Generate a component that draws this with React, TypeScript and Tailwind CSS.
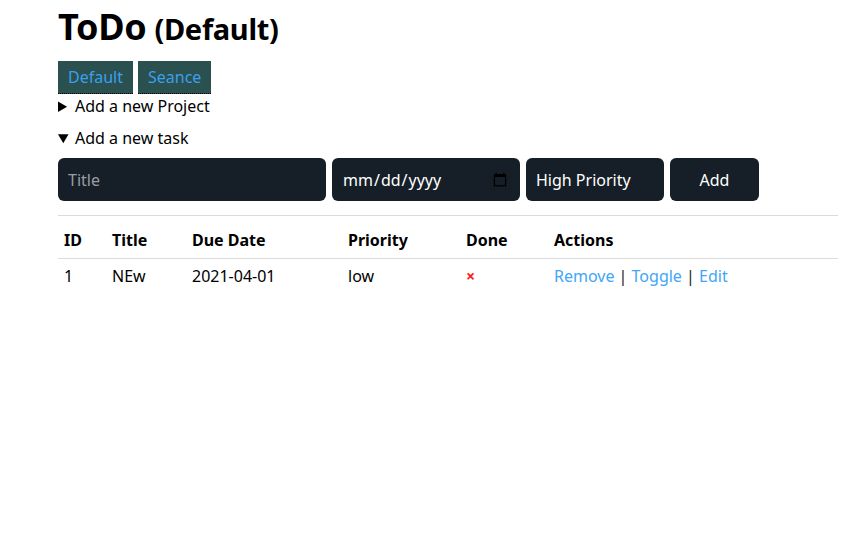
import { useState } from "react";

type Task = {
  id: number;
  title: string;
  dueDate: string;
  priority: string;
  done: boolean;
};

const PROJECTS = ["Default", "Seance"];

const TASKS: Task[] = [{ id: 1, title: "NEw", dueDate: "2021-04-01", priority: "low", done: false }];

export default function App() {
  const [title, setTitle] = useState("");
  const [due, setDue] = useState("");
  const [priority, setPriority] = useState("high");

  return (
    <div className="ml-[58px] w-[780px] font-['Noto_Sans',sans-serif] text-[16px] text-black">
      <h1 className="flex items-baseline gap-[8px] pt-[2px] text-[36px] leading-[50px] font-bold tracking-[-0.3px]">
        <span>ToDo</span>
        <span className="text-[29px]">(Default)</span>
      </h1>

      <div className="mt-[7px] flex gap-[5px]">
        {PROJECTS.map((project) => (
          <button
            key={project}
            className="h-[33px] border-b border-dotted border-black bg-[#2a504f] px-[10px] text-[16px] text-[#3d9fec]"
          >
            {project}
          </button>
        ))}
      </div>

      <details>
        <summary className="mt-[1px] h-[22px] leading-[22px]">Add a new Project</summary>
      </details>

      <details open className="mt-[10px]">
        <summary className="h-[22px] leading-[22px]">Add a new task</summary>
        <form
          className="mt-[9px] flex gap-[6px]"
          onSubmit={(event) => event.preventDefault()}
        >
          <input
            className="h-[43px] w-[268px] rounded-[6px] bg-[#161f27] px-[10px] text-white outline-none placeholder:text-[#9a9ea3]"
            placeholder="Title"
            value={title}
            onChange={(event) => setTitle(event.target.value)}
          />
          <input
            type="date"
            className="h-[43px] w-[188px] rounded-[6px] bg-[#161f27] px-[10px] text-white outline-none"
            value={due}
            onChange={(event) => setDue(event.target.value)}
          />
          <select
            className="h-[43px] w-[138px] appearance-none rounded-[6px] bg-[#161f27] px-[10px] text-white outline-none"
            value={priority}
            onChange={(event) => setPriority(event.target.value)}
          >
            <option value="high">High Priority</option>
            <option value="medium">Medium Priority</option>
            <option value="low">Low Priority</option>
          </select>
          <button
            type="submit"
            className="h-[43px] w-[89px] rounded-[6px] bg-[#161f27] text-white"
          >
            Add
          </button>
        </form>
      </details>

      <hr className="mt-[14px] border-t border-[#dbdbdb]" />

      <table className="mt-[7px] w-full border-collapse text-left">
        <thead>
          <tr className="border-b border-[#dbdbdb]">
            <th className="w-[48px] px-[6px] py-[8px] leading-[19px] font-bold">ID</th>
            <th className="w-[80px] px-[6px] py-[8px] leading-[19px] font-bold">Title</th>
            <th className="w-[156px] px-[6px] py-[8px] leading-[19px] font-bold">Due Date</th>
            <th className="w-[118px] px-[6px] py-[8px] leading-[19px] font-bold">Priority</th>
            <th className="w-[88px] px-[6px] py-[8px] leading-[19px] font-bold">Done</th>
            <th className="px-[6px] py-[8px] leading-[19px] font-bold">Actions</th>
          </tr>
        </thead>
        <tbody>
          {TASKS.map((task) => (
            <tr key={task.id}>
              <td className="px-[6px] py-[8px] leading-[19px]">{task.id}</td>
              <td className="px-[6px] py-[8px] leading-[19px]">{task.title}</td>
              <td className="px-[6px] py-[8px] leading-[19px]">{task.dueDate}</td>
              <td className="px-[6px] py-[8px] leading-[19px]">{task.priority}</td>
              <td className="px-[6px] py-[8px] text-[16px] leading-[19px] font-bold text-[#ff1a1a]">
                {task.done ? "✓" : "×"}
              </td>
              <td className="px-[6px] py-[8px] leading-[19px]">
                <a href="#" className="text-[#41a6f7]">Remove</a>
                <span className="text-[#1a1a1a]">{" | "}</span>
                <a href="#" className="text-[#41a6f7]">Toggle</a>
                <span className="text-[#1a1a1a]">{" | "}</span>
                <a href="#" className="text-[#41a6f7]">Edit</a>
              </td>
            </tr>
          ))}
        </tbody>
      </table>
    </div>
  );
}
